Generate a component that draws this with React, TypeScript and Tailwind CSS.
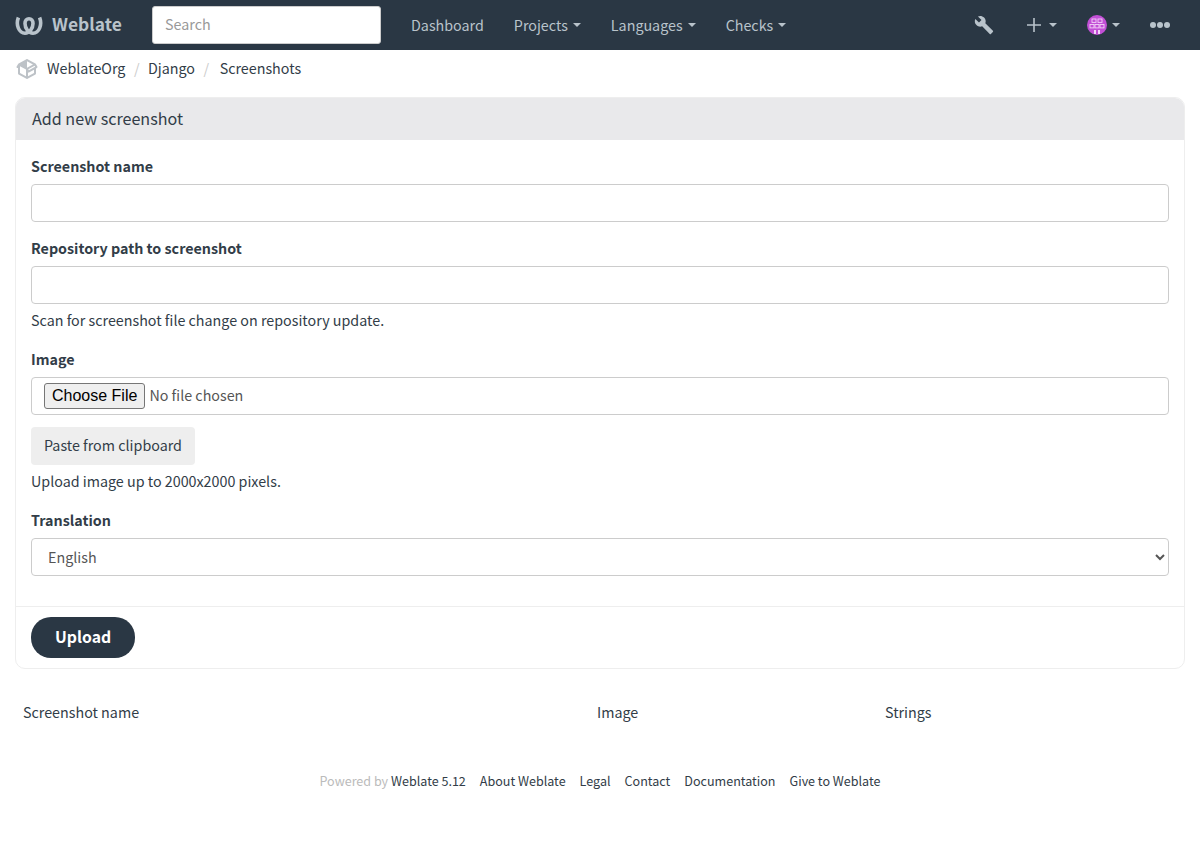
const FONT = "font-['Noto_Sans_CJK_SC','Source_Sans_3',sans-serif]";
const TEXT_LINE = 'pb-[2px] leading-[22px]';

function Caret({ className = 'ml-[5px]' }: { className?: string }) {
  return <span className={`${className} inline-block h-0 w-0 border-x-4 border-t-4 border-x-transparent border-t-current`} />;
}

function WeblateLogo() {
  return (
    <svg viewBox="0 0 28 24" className="h-6 w-7" fill="none" stroke="#b9c3cb">
      <path d="M3.4 4.5C0.5 12 4 20.2 10 20.2C14.5 20.2 18 15.5 18 10.5C18 7.5 16.3 5.8 14 5.8C11.7 5.8 10 7.5 10 10.5C10 15.5 13.5 20.2 18 20.2C24 20.2 27.5 12 24.6 4.5" strokeWidth="3.6" />
    </svg>
  );
}

function Wrench() {
  return (
    <svg viewBox="0 0 24 24" className="h-5 w-5" fill="#b9c3cb">
      <path d="M22.7 19l-9.1-9.1c.9-2.3.4-5-1.5-6.9-2-2-5-2.4-7.4-1.3L9 6 6 9 1.6 4.7C.4 7.1.9 10.1 2.9 12.1c1.9 1.9 4.6 2.4 6.9 1.5l9.1 9.1c.4.4 1 .4 1.4 0l2.3-2.3c.5-.4.5-1.1.1-1.4z" />
    </svg>
  );
}

function OrgIcon() {
  return (
    <svg viewBox="0 0 24 24" className="h-6 w-6" fill="#bdc2c7">
      <path d="M2,10.96C1.5,10.68 1.35,10.07 1.63,9.59L3.13,7C3.24,6.8 3.41,6.66 3.6,6.58L11.43,2.18C11.59,2.06 11.79,2 12,2C12.21,2 12.41,2.06 12.57,2.18L20.47,6.62C20.66,6.72 20.82,6.88 20.91,7.08L22.36,9.6C22.64,10.08 22.47,10.69 22,10.96L21,11.54V16.5C21,16.88 20.79,17.21 20.47,17.38L12.57,21.82C12.41,21.94 12.21,22 12,22C11.79,22 11.59,21.94 11.43,21.82L3.53,17.38C3.21,17.21 3,16.88 3,16.5V10.96C2.7,11.13 2.32,11.14 2,10.96M12,4.15L12,10.85L17.96,7.5L12,4.15M5,15.91L11,19.29V12.58L5,9.21V15.91M19,15.91V12.69L14,15.59C13.67,15.77 13.3,15.76 13,15.6V19.29L19,15.91M13.85,13.36L20.13,9.73L19.55,8.72L13.27,12.35L13.85,13.36Z" />
    </svg>
  );
}

function Avatar() {
  return (
    <svg viewBox="0 0 20 20" className="h-5 w-5">
      <circle cx="10" cy="10" r="10" fill="#c24fd6" />
      <g fill="none" stroke="#f3d3f8" strokeWidth="0.9">
        <rect x="5" y="4" width="4" height="3.4" />
        <rect x="11" y="4" width="4" height="3.4" />
        <rect x="3" y="9.5" width="4" height="3.4" />
        <rect x="8" y="9.5" width="4" height="3.4" />
        <rect x="13" y="9.5" width="4" height="3.4" />
      </g>
      <rect x="7" y="15" width="2" height="4" fill="#f3d3f8" />
      <rect x="11" y="15" width="2" height="4" fill="#f3d3f8" />
    </svg>
  );
}

function Dots() {
  return (
    <span className="flex gap-px">
      <span className="h-[6px] w-[6px] rounded-full bg-[#b9c3cb]" />
      <span className="h-[6px] w-[6px] rounded-full bg-[#b9c3cb]" />
      <span className="h-[6px] w-[6px] rounded-full bg-[#b9c3cb]" />
    </span>
  );
}

function Field({ label, help }: { label: string; help?: string }) {
  return (
    <div className="mb-[15px]">
      <label className={`${TEXT_LINE} mb-[5px] block font-bold`}>{label}</label>
      <input type="text" className="block h-[38px] w-full rounded-[4px] border border-[#cccccc] bg-white px-3" />
      {help && <p className={`${TEXT_LINE} mt-[5px]`}>{help}</p>}
    </div>
  );
}

export default function App() {
  const navLinks = ['Dashboard', 'Projects', 'Languages', 'Checks'];

  return (
    <div className={`${FONT} min-h-[841px] bg-white text-[14.3px] leading-6 text-[#323d48]`}>
      <nav className="flex h-[50px] items-center bg-[#2a3744] text-[#b9c3cb]">
        <a className="ml-[15px] flex w-[137px] items-center">
          <WeblateLogo />
          <span className="ml-[9px] pb-[2px] text-[17.4px] font-semibold">Weblate</span>
        </a>
        <input
          type="text"
          placeholder="Search"
          className="h-[38px] w-[229px] rounded-[3px] border border-[#cccccc] bg-white px-3 pb-[3px] placeholder:text-[#999999]"
        />
        <ul className="ml-[15px] flex">
          {navLinks.map((link) => (
            <li key={link} className="flex items-center px-[15px]">
              {link}
              {link !== 'Dashboard' && <Caret />}
            </li>
          ))}
        </ul>
        <div className="ml-auto flex items-center">
          <Wrench />
          <span className="ml-[33px] flex items-center">
            <svg viewBox="0 0 14 14" className="h-[14px] w-[14px]" stroke="#b9c3cb" strokeWidth="1.6">
              <path d="M7 0V14M0 7H14" />
            </svg>
            <Caret className="ml-2" />
          </span>
          <span className="ml-[30px] flex items-center">
            <Avatar />
            <Caret />
          </span>
          <span className="mr-[30px] ml-[30px]">
            <Dots />
          </span>
        </div>
      </nav>

      <div className="flex h-[38px] items-center px-[15px]">
        <OrgIcon />
        <ol className={`${TEXT_LINE} ml-2 flex`}>
          <li>WeblateOrg</li>
          <li className="px-[8.5px] text-[#cccccc]">/</li>
          <li>Django</li>
          <li className="px-[8.5px] text-[#cccccc]">/</li>
          <li className="ml-[2px]">Screenshots</li>
        </ol>
      </div>

      <div className="mx-[15px] mt-[9px] overflow-hidden rounded-[10px] border border-[#eeeeee]">
        <div className="flex h-[42px] items-center bg-[#e9e9eb] px-4 pb-[3px] text-[16.1px]">Add new screenshot</div>
        <div className="p-[15px]">
          <Field label="Screenshot name" />
          <Field label="Repository path to screenshot" help="Scan for screenshot file change on repository update." />
          <div className="mb-[15px]">
            <label className={`${TEXT_LINE} mb-[5px] block font-bold`}>Image</label>
            <input
              type="file"
              className="block h-[38px] w-full rounded-[4px] border border-[#cccccc] px-3 pt-[5px] pb-[7px] text-[#555555] file:mr-[4px] file:rounded-[3px] file:border file:border-[#767676] file:bg-[#efefef] file:px-[7px] file:py-0 file:font-['Liberation_Sans',sans-serif] file:text-base file:text-black"
            />
            <button className="mt-3 h-[38px] rounded-[4px] bg-[#eeeeee] px-[13px] pb-[2px]">Paste from clipboard</button>
            <p className={`${TEXT_LINE} mt-[5px]`}>Upload image up to 2000x2000 pixels.</p>
          </div>
          <div className="mb-[15px]">
            <label className={`${TEXT_LINE} mb-[5px] block font-bold`}>Translation</label>
            <select className="block h-[38px] w-full rounded-[4px] border border-[#cccccc] bg-white px-3 pb-[2px] text-[#555555]">
              <option>English</option>
            </select>
          </div>
        </div>
        <div className="border-t border-[#eeeeee] px-[15px] py-[10px]">
          <button className="h-[41px] rounded-[20px] bg-[#2a3744] px-6 pb-[2px] text-[15.8px] font-semibold text-white">Upload</button>
        </div>
      </div>

      <div className={`${TEXT_LINE} mx-[15px] mt-[32px] grid grid-cols-[574px_288px_1fr] px-2`}>
        <span>Screenshot name</span>
        <span>Image</span>
        <span>Strings</span>
      </div>

      <footer className="mt-[44px] flex justify-center gap-[14px] text-[12.55px]">
        <span>
          <span className="text-[#bbbbbb]">Powered by </span>Weblate 5.12
        </span>
        <span>About Weblate</span>
        <span>Legal</span>
        <span>Contact</span>
        <span>Documentation</span>
        <span>Give to Weblate</span>
      </footer>
    </div>
  );
}
